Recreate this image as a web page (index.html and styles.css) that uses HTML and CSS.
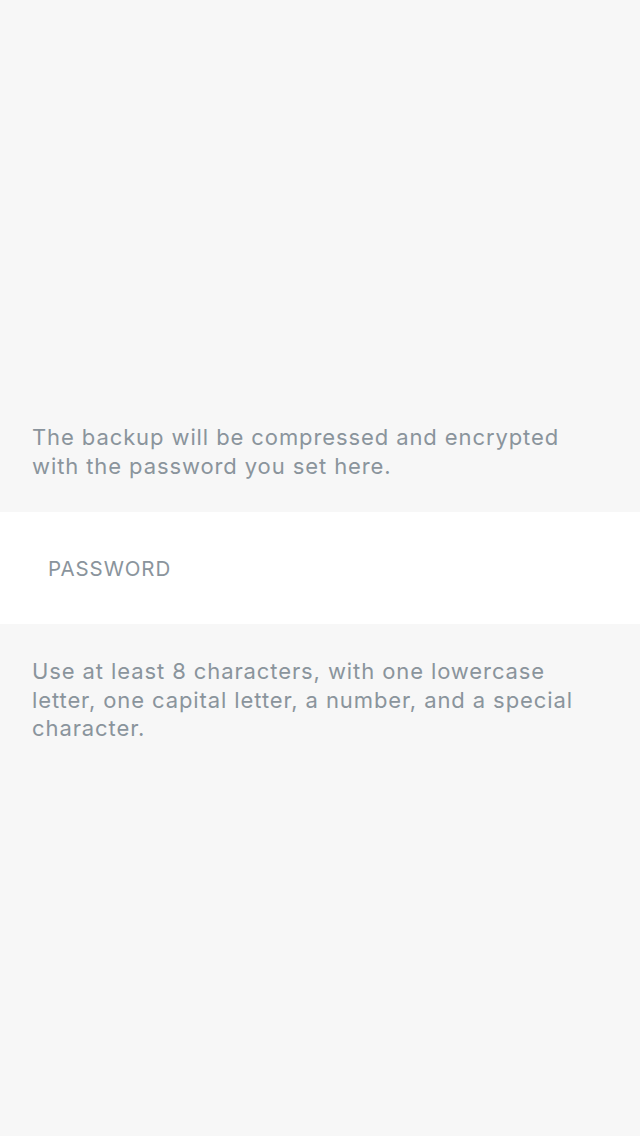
FILE: index.html
```
<!DOCTYPE html>
<html>
<head>
<meta charset="utf-8">
<link rel="stylesheet" href="styles.css">
</head>
<body>
<div class="screen">
  <p class="note note-top">The backup will be compressed and encrypted with the password you set here.</p>
  <div class="field">
    <span class="field-label">PASSWORD</span>
  </div>
  <p class="note note-bottom">Use at least 8 characters, with one lowercase letter, one capital letter, a number, and a special character.</p>
</div>
</body>
</html>
```
FILE: styles.css
```
html, body {
  margin: 0;
  padding: 0;
  background: #f7f7f7;
}
.screen {
  width: 640px;
  height: 1136px;
  display: flex;
  flex-direction: column;
  background: #f7f7f7;
  font-family: Inter, Roboto, "Liberation Sans", sans-serif;
}
.note {
  margin: 0;
  padding: 0 48px 0 32px;
  font-size: 22px;
  letter-spacing: 0.9px;
  line-height: 28.5px;
  color: #8a949c;
}
.note-top {
  padding-top: 423px;
  padding-bottom: 32px;
}
.note-bottom {
  padding-top: 33px;
}
.field {
  height: 112px;
  background: #ffffff;
  display: flex;
  align-items: center;
  padding-left: 48px;
}
.field-label {
  font-size: 20.5px;
  letter-spacing: 0.9px;
  color: #8a949c;
}
```
